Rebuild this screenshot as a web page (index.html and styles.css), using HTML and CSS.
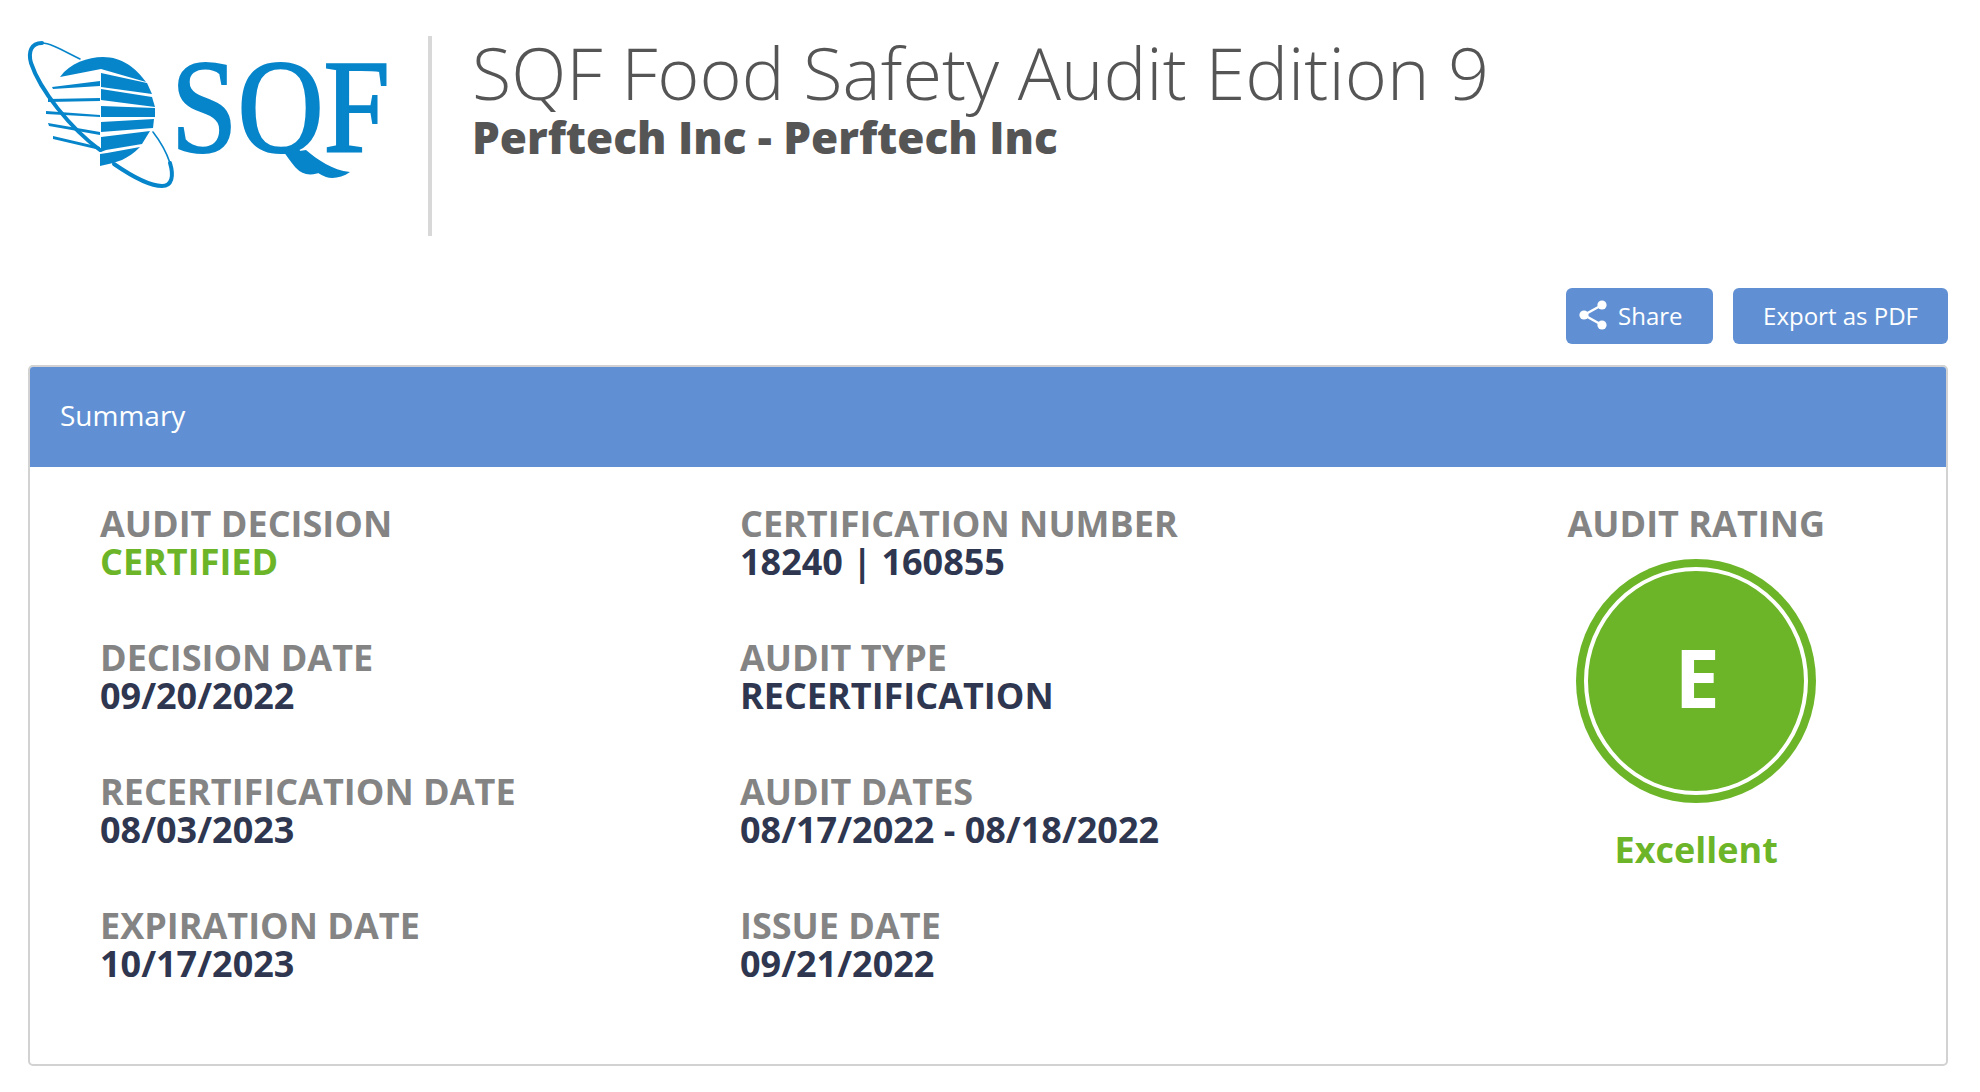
FILE: index.html
```html
<!DOCTYPE html>
<html lang="en">
<head>
<meta charset="utf-8">
<title>SQF Food Safety Audit Edition 9</title>
<link rel="stylesheet" href="styles.css">
</head>
<body>
<header class="page-header">
  <svg class="logo" viewBox="0 36 428 200" aria-label="SQF">
    <g fill="#0785cb">
      <path d="M60,77 C70,63 88,57 103,57 C122,57 136,68 146,82 L101,69 Z"/>
      <path d="M101,73 L147,83 L152,94 L101,87 Z"/>
      <path d="M101,89 L152,97 L155,107 L101,100 Z"/>
      <path d="M101,106 L155,108 L155,117 L101,117 Z"/>
      <path d="M101,122 L154,119 L153,128 L101,132 Z"/>
      <path d="M101,137 L150,131 L142,144 L106,150 L101,152 Z"/>
      <path d="M107,153 L140,147 C134,153 128,157 122,160 L113,163 L100,166 L100,154 Z"/>
      <path d="M52,87 L100,81 L100,86 L53,89 Z"/>
      <path d="M48,99 L100,98 L100,101 L48,102 Z"/>
      <path d="M46,111 L100,115 L100,117 L46,114 Z"/>
      <path d="M48,123 L100,132 L100,135 L49,126 Z"/>
      <path d="M53,136 L100,147 L100,150 L53,139 Z"/>
      <path d="M293,152 L306,150 C318,160 332,170 350,172 C342,178 332,179 326,177 C314,172 304,162 293,152 Z"/>
    </g>
    <g fill="none" stroke="#0785cb" stroke-linecap="round">
      <path stroke-width="1.6" d="M80,59 C62,50 50,43 42,43"/>
      <path stroke-width="4" d="M42,43 C31,43 28,52 31,63 C40,90 70,128 100,150"/>
      <path stroke-width="4" d="M114,164 C130,175 148,186 162,186 C172,186 174,176 170,163"/>
      <path stroke-width="1.6" d="M170,163 C166,151 160,141 153,132"/>
    </g>
    <text class="logo-text" x="171" y="152" textLength="219" lengthAdjust="spacingAndGlyphs">SQF</text>
  </svg>
  <div class="header-rule"></div>
  <div class="heading">
    <h1 class="title">SQF Food Safety Audit Edition 9</h1>
    <h2 class="subtitle">Perftech Inc - Perftech Inc</h2>
  </div>
</header>

<div class="toolbar">
  <button class="btn btn-share" type="button">
    <svg class="share-icon" viewBox="0 0 28 30">
      <g fill="#fff">
        <circle cx="23" cy="5" r="4.6"/>
        <circle cx="5" cy="15" r="4.6"/>
        <circle cx="23" cy="25" r="4.6"/>
      </g>
      <path d="M23,5 L5,15 L23,25" fill="none" stroke="#fff" stroke-width="2.4"/>
    </svg>
    <span>Share</span>
  </button>
  <button class="btn btn-export" type="button">Export as PDF</button>
</div>

<section class="card">
  <div class="card-header">Summary</div>
  <div class="card-body">
    <div class="col">
      <div class="field"><div class="label">AUDIT DECISION</div><div class="value value-green">CERTIFIED</div></div>
      <div class="field"><div class="label">DECISION DATE</div><div class="value">09/20/2022</div></div>
      <div class="field"><div class="label">RECERTIFICATION DATE</div><div class="value">08/03/2023</div></div>
      <div class="field"><div class="label">EXPIRATION DATE</div><div class="value">10/17/2023</div></div>
    </div>
    <div class="col">
      <div class="field"><div class="label">CERTIFICATION NUMBER</div><div class="value">18240 | 160855</div></div>
      <div class="field"><div class="label">AUDIT TYPE</div><div class="value">RECERTIFICATION</div></div>
      <div class="field"><div class="label">AUDIT DATES</div><div class="value">08/17/2022 - 08/18/2022</div></div>
      <div class="field"><div class="label">ISSUE DATE</div><div class="value">09/21/2022</div></div>
    </div>
    <div class="rating">
      <div class="label">AUDIT RATING</div>
      <div class="badge"><div class="badge-inner">E</div></div>
      <div class="rating-text">Excellent</div>
    </div>
  </div>
</section>
</body>
</html>
```
FILE: styles.css
```css
* { box-sizing: border-box; }
html, body { margin: 0; padding: 0; background: #fff; }
body { font-family: "Open Sans", "Liberation Sans", sans-serif; height: 1092px; overflow: hidden; }

.page-header { display: flex; align-items: flex-start; height: 236px; }
.logo { display: block; width: 428px; height: 200px; margin-top: 36px; flex: none; }
.logo-text { font-family: "Liberation Serif", serif; font-size: 133px; fill: #0785cb; stroke: #0785cb; stroke-width: 2px; }
.header-rule { width: 4px; height: 200px; margin-top: 36px; background: #d8d8d8; flex: none; }
.heading { margin-left: 40px; padding-top: 31px; }
.title { margin: 0; font-size: 72px; line-height: 82px; font-weight: 300; color: #555; white-space: nowrap; }
.subtitle { margin: 0; font-size: 44px; line-height: 48px; font-weight: 800; color: #555; white-space: nowrap; }

.toolbar { display: flex; justify-content: flex-end; gap: 20px; margin-top: 52px; padding-right: 32px; }
.btn { height: 56px; border: 0; border-radius: 6px; background: #6090d3; color: #fff; font-family: inherit; font-size: 24px; display: flex; align-items: center; justify-content: center; padding: 0 0 2px; }
.btn-share { width: 147px; gap: 11px; justify-content: flex-start; padding-left: 13px; }
.btn-export { width: 215px; }
.share-icon { width: 28px; height: 30px; display: block; }

.card { margin: 21px 32px 0 28px; border: 2px solid #d2d2d2; border-radius: 5px; overflow: hidden; }
.card-header { height: 100px; padding: 0 0 4px 30px; display: flex; align-items: center; background: #6090d3; color: #fff; font-size: 28px; }
.card-body { display: grid; grid-template-columns: 640px 1fr auto; padding: 38px 121px 81px 70px; }
.col { display: flex; flex-direction: column; gap: 58px; }
.label { font-size: 36px; line-height: 38px; font-weight: 700; color: #848484; white-space: nowrap; }
.value { font-size: 36px; line-height: 38px; font-weight: 700; color: #2e3650; white-space: nowrap; }
.value-green { color: #6cb528; }

.rating { display: flex; flex-direction: column; align-items: center; }
.badge { width: 240px; height: 244px; margin-top: 16px; border-radius: 50%; background: #6cb528; padding: 8px; }
.badge-inner { width: 100%; height: 100%; border-radius: 50%; border: 4px solid #fff; display: flex; align-items: center; justify-content: center; color: #fff; font-size: 81px; font-weight: 700; line-height: 1; padding: 0 0 9px 2px; }
.rating-text { margin-top: 23px; font-size: 36px; line-height: 48px; font-weight: 700; color: #6cb528; }
```
